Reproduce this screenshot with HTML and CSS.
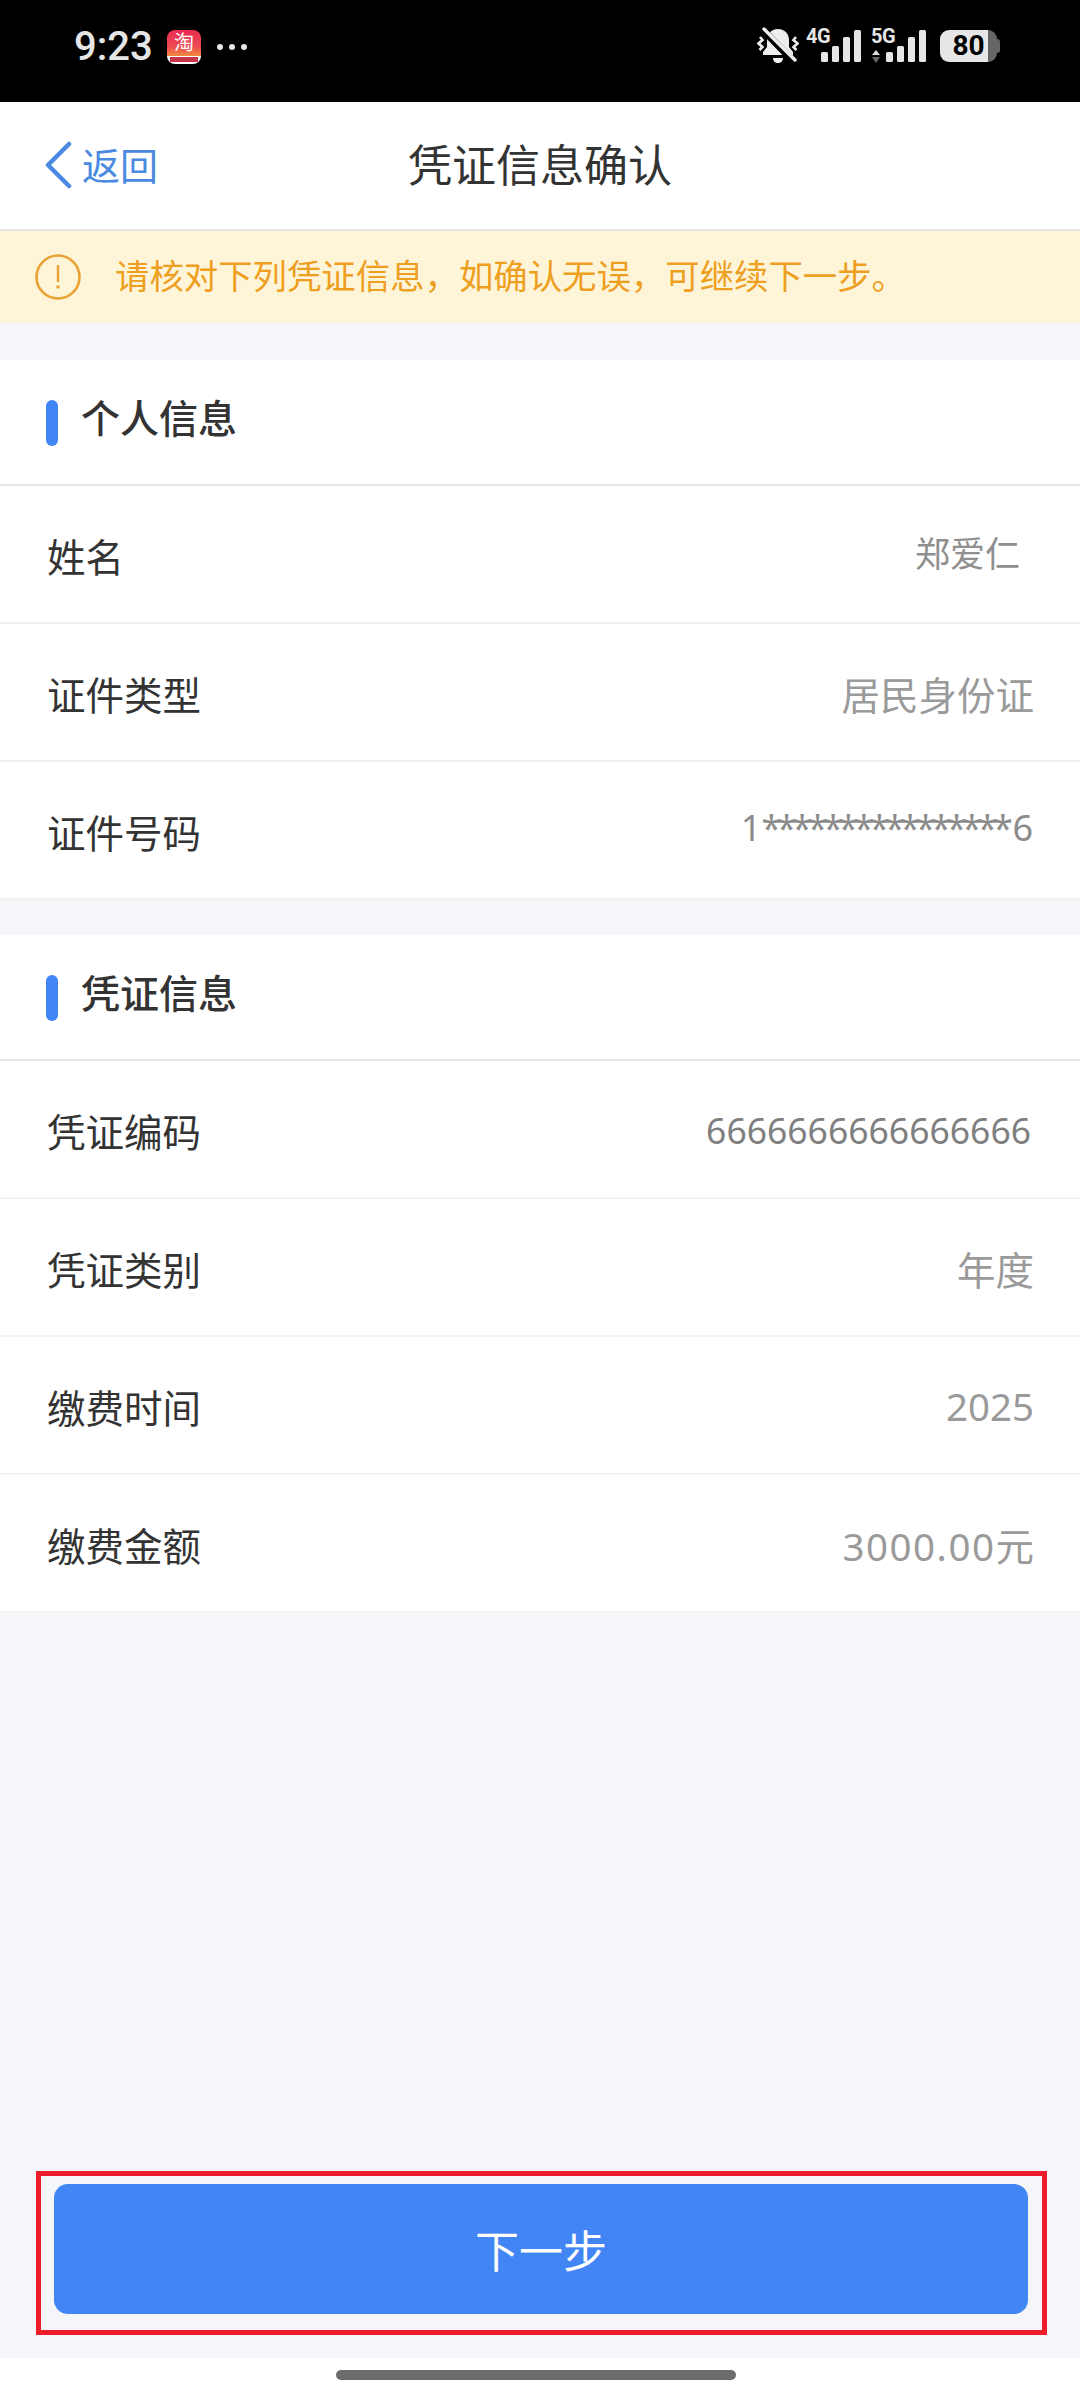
FILE: index.html
```html
<!DOCTYPE html>
<html lang="zh-CN">
<head>
<meta charset="utf-8">
<title>凭证信息确认</title>
<link rel="stylesheet" href="styles.css">
</head>
<body>
<div class="phone">
  <header class="status">
    <div class="status-left">
      <span class="clock">9:23</span>
      <span class="app-icon"><span class="app-glyph">淘</span><span class="app-strip"></span></span>
      <span class="dots"><i></i><i></i><i></i></span>
    </div>
    <div class="status-right">
      <svg class="bell" width="42" height="37" viewBox="0 0 42 37">
        <path fill="#eee" d="M21 2c-7 0-11 5-11 11v7l-4 5v3h30v-3l-4-5v-7c0-6-4-11-11-11z"/>
        <path fill="#eee" d="M16 31h10c0 3-2 5-5 5s-5-2-5-5z"/>
        <path stroke="#000" stroke-width="7" d="M4 1l33 34"/>
        <path stroke="#eee" stroke-width="3.4" stroke-linecap="round" d="M7 2l31 31"/>
        <path fill="none" stroke="#eee" stroke-width="2.6" d="M3 10l2.500 3-4 3.500 4 3.500-3 3M39 10l-2.500 3 4 3.500-4 3.500 3 3"/>
      </svg>
      <div class="signal">
        <span class="net">4G</span>
        <span class="bars"><i class="b1"></i><i class="b2"></i><i class="b3"></i><i class="b4"></i></span>
      </div>
      <div class="signal">
        <span class="net">5G</span>
        <svg class="updown" width="8" height="13" viewBox="0 0 8 13"><path fill="#ddd" d="M4 0l4 5H0z"/><path fill="#666" d="M4 13L0 7h8z"/></svg>
        <span class="bars"><i class="b1"></i><i class="b2"></i><i class="b3"></i><i class="b4"></i></span>
      </div>
      <div class="battery"><span class="batt-body">80</span><span class="batt-cap"></span></div>
    </div>
  </header>

  <nav class="nav">
    <a class="back">
      <svg width="28" height="48" viewBox="0 0 28 48"><path fill="none" stroke="#4a8ae0" stroke-width="4.500" stroke-linecap="round" stroke-linejoin="round" d="M25 3L4 24l21 21"/></svg>
      <span>返回</span>
    </a>
    <h1 class="title">凭证信息确认</h1>
  </nav>

  <div class="notice">
    <svg width="46" height="46" viewBox="0 0 46 46"><circle cx="23" cy="23" r="21.500" fill="none" stroke="#e8a235" stroke-width="2.600"/><path stroke="#e8a235" stroke-width="2.400" d="M23 11v17"/><circle cx="23" cy="33" r="1.800" fill="#e8a235"/></svg>
    <span>请核对下列凭证信息，如确认无误，可继续下一步。</span>
  </div>

  <section class="card">
    <div class="card-head"><i class="mark"></i><h2>个人信息</h2></div>
    <div class="row"><span class="label">姓名</span><span class="value name-value">郑爱仁</span></div>
    <div class="row"><span class="label">证件类型</span><span class="value">居民身份证</span></div>
    <div class="row"><span class="label">证件号码</span><span class="value num-value">1<span class="stars">****************</span>6</span></div>
  </section>

  <section class="card">
    <div class="card-head"><i class="mark"></i><h2>凭证信息</h2></div>
    <div class="row"><span class="label">凭证编码</span><span class="value code-value">6666666666666666</span></div>
    <div class="row"><span class="label">凭证类别</span><span class="value">年度</span></div>
    <div class="row"><span class="label">缴费时间</span><span class="value">2025</span></div>
    <div class="row"><span class="label">缴费金额</span><span class="value"><span class="amount">3000.00</span>元</span></div>
  </section>

  <div class="spacer"></div>

  <div class="action">
    <div class="highlight"><button class="next">下一步</button></div>
  </div>

  <footer class="home"><i class="home-bar"></i></footer>
</div>
</body>
</html>
```
FILE: styles.css
```css
* { box-sizing: border-box; margin: 0; padding: 0; }
html, body { width: 1080px; height: 2400px; background: #fff; }
body { font-family: "Noto Sans", "Noto Sans CJK SC", sans-serif; color: #333; }
i { display: block; font-style: normal; }

.phone { width: 1080px; height: 2400px; display: flex; flex-direction: column; background: #f5f6fa; }

.status { height: 102px; background: #000; display: flex; justify-content: space-between; align-items: flex-start; padding: 28px 80px 0 74px; flex: none; }
.status-left { display: flex; align-items: center; height: 48px; margin-top: -5px; }
.clock { font-family: Roboto, sans-serif; font-size: 40px; font-weight: 500; color: #e6e6e6; line-height: 48px; width: 93px; white-space: nowrap; }
.app-icon { position: relative; display: block; width: 34px; height: 34px; border-radius: 8px; overflow: hidden; background: linear-gradient(#ea2a52 0%, #ee4b53 50%, #f08a3c 76%, #fff 76%); }
.app-glyph { display: block; text-align: center; font-size: 20px; line-height: 26px; color: #fff; }
.app-strip { position: absolute; left: 3px; right: 3px; bottom: 2px; height: 5px; background: #c9364a; }
.dots { display: flex; gap: 6px; margin-left: 16px; }
.dots i { width: 6px; height: 6px; border-radius: 50%; background: #e6e6e6; }

.status-right { display: flex; align-items: flex-start; }
.bell { display: block; margin-top: -1px; margin-right: 7px; }
.signal { position: relative; width: 55px; height: 34px; margin-right: 10px; }
.signal + .battery { margin-left: 4px; }
.net { position: absolute; left: 0; top: -1px; font-family: Roboto, sans-serif; font-weight: 700; font-size: 20px; line-height: 18px; color: #e6e6e6; letter-spacing: -0.5px; }
.updown { position: absolute; left: 1px; top: 22px; }
.bars { position: absolute; right: 0; bottom: 0; display: flex; align-items: flex-end; gap: 4.4px; }
.bars i { width: 6.7px; background: #e6e6e6; border-radius: 1.5px; }
.b1 { height: 10px; }
.b2 { height: 16px; }
.b3 { height: 25px; }
.b4 { height: 32px; }
.battery { display: flex; align-items: center; margin-top: 2px; }
.batt-body { display: block; width: 57px; height: 32px; border-radius: 9px; background: linear-gradient(90deg, #e6e6e6 84%, #666 84%); color: #000; font-family: Roboto, sans-serif; font-weight: 700; font-size: 28px; line-height: 32px; text-align: center; }
.batt-cap { display: block; width: 3px; height: 14px; background: #666; border-radius: 0 3px 3px 0; }

.nav { position: relative; height: 129px; flex: none; background: #fff; border-bottom: 2px solid #e6e6e6; display: flex; align-items: center; justify-content: center; }
.back { position: absolute; left: 44px; top: 39px; display: flex; align-items: center; gap: 10px; color: #4a8ae0; font-size: 38px; line-height: 48px; }
.back svg { display: block; }
.title { font-size: 44px; font-weight: 400; color: #333; line-height: 60px; padding-bottom: 2px; }

.notice { height: 92px; flex: none; background: #fef5d8; display: flex; align-items: center; gap: 34px; padding: 0 0 6px 35px; color: #ee9f1f; font-size: 34.4px; }
.notice svg { display: block; flex: none; margin-top: 6px; }

.card { background: #fff; margin-top: 37px; flex: none; }
.card + .card { margin-top: 35px; }
.card-head { height: 126px; display: flex; align-items: center; padding: 0 0 8px 46px; border-bottom: 2px solid #e6e6e6; }
.mark { width: 12px; height: 46px; border-radius: 6px; background: #4285f4; margin-top: 9px; }
.card-head h2 { font-size: 39px; font-weight: 500; color: #333; margin-left: 23px; line-height: 50px; }
.row { height: 138px; padding: 2px 46px 0 47px; display: flex; align-items: center; justify-content: space-between; border-bottom: 2px solid #f2f2f2; }
.label { font-size: 38.5px; color: #333; }
.value { font-size: 38.5px; color: #9a9a9a; }
.name-value { font-size: 35px; margin-right: 14px; margin-bottom: 8px; color: #8f8f8f; }
.num-value { color: #8c8c8c; margin-bottom: 8px; font-size: 36px; margin-right: 1px; }
.stars { letter-spacing: -4.4px; margin-right: 4px; }
.code-value { color: #7f7f7f; margin-right: 3px; font-size: 35.5px; }
.amount { letter-spacing: 1.5px; }

.spacer { flex: 1; }

.action { flex: none; height: 187px; padding: 0 33px 23px 36px; }
.highlight { height: 164px; border: 5px solid #ed1c2a; padding: 8px 14px 16px 13px; }
.next { display: block; width: 100%; height: 130px; border: 0; border-radius: 14px; background: #4285f4; color: #fff; font-family: inherit; font-size: 44px; }

.home { height: 42px; flex: none; background: #fff; display: flex; justify-content: center; padding-top: 12px; }
.home-bar { width: 400px; height: 10px; border-radius: 5px; background: #6b6b6b; margin-right: 8px; }
```
